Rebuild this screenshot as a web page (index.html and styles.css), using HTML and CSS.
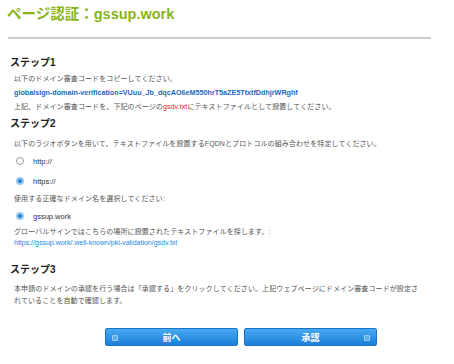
FILE: index.html
```html
<!DOCTYPE html>
<html>
<head>
	<meta charset="utf-8">
	<link rel="stylesheet" href="styles.css">
	<title>ページ認証</title>
</head>
<body>
	<h1 class="title">ページ認証：gssup.work</h1>
	<div class="rule"></div>

	<div class="step">
		<h2 class="step-head first">ステップ1</h2>
		<p class="txt">以下のドメイン審査コードをコピーしてください。</p>
		<p class="txt code">globalsign-domain-verification=VUuu_Jb_dqcAO6eM550hrT5aZE5TtxtfDdhjrWRghf</p>
		<p class="txt">上記、ドメイン審査コードを、下記のページの<span class="red">gsdv.txt</span>にテキストファイルとして設置してください。</p>
	</div>

	<div class="step">
		<h2 class="step-head">ステップ2</h2>
		<p class="txt lead">以下のラジオボタンを用いて、テキストファイルを設置するFQDNとプロトコルの組み合わせを特定してください。</p>
		<label class="radio"><span class="dot"></span>http://</label>
		<label class="radio"><span class="dot on"></span>https://</label>
		<p class="txt gap">使用する正確なドメイン名を選択してください:</p>
		<label class="radio"><span class="dot on"></span>gssup.work</label>
		<p class="txt tight">グローバルサインではこちらの場所に設置されたテキストファイルを探します。:</p>
		<a class="url" href="#">https://gssup.work/.well-known/pki-validation/gsdv.txt</a>
	</div>

	<div class="step">
		<h2 class="step-head third">ステップ3</h2>
		<p class="txt para">本申請のドメインの承認を行う場合は「承認する」をクリックしてください。上記ウェブページにドメイン審査コードが設定されていることを自動で確認します。</p>
	</div>

	<div class="actions">
		<button class="btn"><span class="ico left"></span>前へ</button>
		<button class="btn"><span class="ico right"></span>承認</button>
	</div>
</body>
</html>
```

FILE: styles.css
```css
html {
	font-family: "Liberation Sans", "Noto Sans CJK JP", sans-serif;
}

body {
	margin: 0;
	background-color: #fff;
	color: #555;
	width: 454px;
}

.title {
	margin: 0;
	padding-left: 7px;
	height: 28px;
	line-height: 28px;
	font-size: 14.5px;
	color: #8ab31c;
}

.rule {
	margin: 9px 0 0 8px;
	width: 423px;
	height: 2px;
	background-color: #ccc;
}

.step {
	padding-left: 10px;
	padding-right: 32px;
}

.step-head {
	margin: 3px 0 0 0;
	font-size: 10px;
	line-height: 14px;
	color: #222;
}

.step-head.first {
	margin-top: 17px;
}

.step-head.third {
	margin-top: 15px;
}

.txt {
	margin: 0 0 0 4px;
	font-size: 7px;
	line-height: 14px;
	letter-spacing: 0.1px;
}

.step-head.first + .txt {
	margin-top: 2px;
}

.code {
	color: #1a68c0;
	font-weight: bold;
	font-size: 7.2px;
	letter-spacing: 0;
}

.red {
	color: #e21a1a;
}

.lead {
	margin-top: 6px;
}

.gap {
	margin-top: 1px;
}

.tight {
	line-height: 12px;
}

.radio {
	display: flex;
	align-items: center;
	height: 20px;
	padding-left: 6px;
	font-size: 7.5px;
	color: #333;
}

.dot {
	display: inline-block;
	box-sizing: border-box;
	width: 8px;
	height: 8px;
	margin-right: 9px;
	border: 1px solid #999;
	border-radius: 50%;
	background-color: #fff;
}

.dot.on {
	border: 2px solid #9cc8f0;
	background-color: #1e7fd8;
}

.url {
	display: block;
	margin-left: 4px;
	font-size: 7px;
	line-height: 10px;
	color: #1e88e5;
	text-decoration: none;
}

.para {
	margin-top: 6px;
	line-height: 12px;
}

.actions {
	display: flex;
	gap: 6px;
	margin-top: 21px;
	padding-left: 105px;
}

.btn {
	position: relative;
	width: 133px;
	height: 18px;
	padding: 0;
	border: 1px solid #1a74c6;
	border-radius: 2px;
	background-image: linear-gradient(#48a8f2, #1a80d8);
	color: #fff;
	font-family: "Liberation Sans", "Noto Sans CJK JP", sans-serif;
	font-size: 9px;
	font-weight: bold;
	cursor: pointer;
}

.ico {
	position: absolute;
	top: 6px;
	width: 4px;
	height: 4px;
	border: 1px solid #9ccbf4;
	border-radius: 1px;
	background-color: #5fb0ee;
}

.ico.left {
	left: 6px;
}

.ico.right {
	right: 6px;
}
```
